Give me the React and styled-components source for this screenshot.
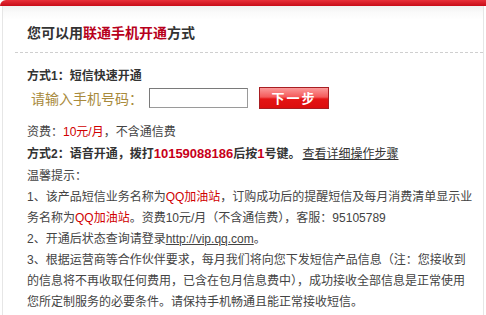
import React from "react";
import styled, { createGlobalStyle } from "styled-components";

const GlobalStyle = createGlobalStyle`
  html, body {
    margin: 0;
    padding: 0;
    background: #fff;
  }
  body {
    font-family: "Liberation Sans", "Noto Sans CJK SC", sans-serif;
    font-size: 12px;
    color: #444;
  }
`;

export default function App() {
  return (
    <Page>
      <GlobalStyle />
      <TopBar />
      <Panel>
        <Header>
          <Title>
            您可以用<TitleRed>联通手机开通</TitleRed>方式
          </Title>
        </Header>
        <Body>
          <Heading>方式1：短信快速开通</Heading>
          <FormRow>
            <Label>请输入手机号码：</Label>
            <PhoneInput type="text" />
            <NextButton type="button">下一步</NextButton>
          </FormRow>
          <Line className="fee">
            资费：<Red>10元/月</Red>，不含通信费
          </Line>
          <Heading className="wide">
            方式2：语音开通，拨打<Number>10159088186</Number>后按
            <Number>1</Number>号键。<DetailLink href="#">查看详细操作步骤</DetailLink>
          </Heading>
          <Tips>
            <div>温馨提示：</div>
            <div>
              1、该产品短信业务名称为<Red>QQ加油站</Red>
              ，订购成功后的提醒短信及每月消费清单显示业务名称为<Red>QQ加油站</Red>
              。资费10元/月（不含通信费），客服：95105789
            </div>
            <div>
              2、开通后状态查询请登录<PlainLink href="#">http://vip.qq.com</PlainLink>。
            </div>
            <div>
              3、根据运营商等合作伙伴要求，每月我们将向您下发短信产品信息（注：您接收到的信息将不再收取任何费用，已含在包月信息费中），成功接收全部信息是正常使用您所定制服务的必要条件。请保持手机畅通且能正常接收短信。
            </div>
          </Tips>
        </Body>
      </Panel>
    </Page>
  );
}

const Page = styled.div`
  width: 486px;
  height: 315px;
  overflow: hidden;
  background: #fff;
`;

const TopBar = styled.div`
  height: 6px;
  background: linear-gradient(#e8303a, #c80c18);
  border-radius: 6px 0 0 0;
`;

const Panel = styled.div`
  margin: 0 2px;
  height: 309px;
  border-left: 1px solid #e6e6e6;
  border-right: 1px solid #e6e6e6;
  background: linear-gradient(#f1f1f1 0, #fafafa 6px, #fff 14px);
`;

const Header = styled.div`
  margin-left: 12px;
  padding: 17px 0 9px 12px;
  border-bottom: 1px dashed #cfcfcf;
`;

const Title = styled.h2`
  margin: 0;
  font-size: 14px;
  line-height: 20px;
  font-weight: bold;
  color: #333;
`;

const TitleRed = styled.span`
  color: #b8001c;
`;

const Body = styled.div`
  padding: 13px 0 0 24px;
  width: 448px;
`;

const Heading = styled.div`
  font-weight: bold;
  color: #333;
  line-height: 21px;
  &.wide {
    line-height: 22px;
  }
`;

const FormRow = styled.div`
  display: flex;
  align-items: center;
  height: 22px;
  padding-left: 4px;
`;

const Label = styled.span`
  font-size: 14px;
  color: #a88a3c;
  width: 118px;
`;

const PhoneInput = styled.input`
  box-sizing: border-box;
  width: 99px;
  height: 20px;
  margin: 0;
  padding: 0 3px;
  border: 1px solid #9a9a9a;
  border-top-color: #7a7a7a;
  border-left-color: #7a7a7a;
  background: #fff;
  outline: none;
`;

const NextButton = styled.button`
  box-sizing: border-box;
  width: 70px;
  height: 22px;
  margin: 0 0 0 11px;
  padding: 0;
  border: 1px solid #a81e22;
  background: linear-gradient(#fb9a9a 0, #f45a5a 45%, #e41414 55%, #dc0e0e 100%);
  color: #fff;
  font-family: "Noto Sans CJK SC", sans-serif;
  font-size: 13px;
  font-weight: bold;
  letter-spacing: 2px;
  line-height: 20px;
`;

const Line = styled.div`
  line-height: 22px;
  &.fee {
    margin-top: 12px;
  }
`;

const Red = styled.span`
  color: #d00000;
`;

const Number = styled.span`
  color: #c8001a;
  font-size: 13px;
`;

const DetailLink = styled.a`
  color: #333;
  font-weight: normal;
  text-decoration: underline;
  margin-left: 2px;
`;

const PlainLink = styled.a`
  color: #444;
  text-decoration: underline;
`;

const Tips = styled.div`
  margin-top: 1px;
  line-height: 21px;
  color: #444;
`;
